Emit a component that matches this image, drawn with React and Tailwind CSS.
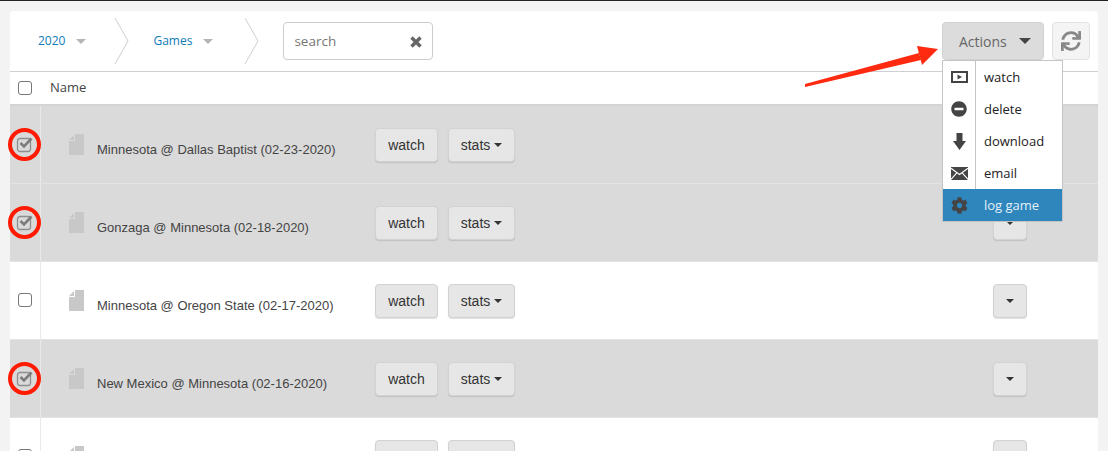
import { FaCog, FaMinusCircle, FaSync } from 'react-icons/fa'

const rows = [
  { name: 'Minnesota @ Dallas Baptist (02-23-2020)', checked: true },
  { name: 'Gonzaga @ Minnesota (02-18-2020)', checked: true },
  { name: 'Minnesota @ Oregon State (02-17-2020)', checked: false },
  { name: 'New Mexico @ Minnesota (02-16-2020)', checked: true },
  { name: '', checked: false },
]

function Caret({ className }) {
  return <span className={`inline-block h-0 w-0 border-x-transparent ${className}`} />
}

function Crumb({ label, className, chevron }) {
  return (
    <div className={`flex items-center ${className}`}>
      <a className="text-[12px] text-[#0f7ab8]">{label}</a>
      <Caret className="ml-[11px] border-x-[5px] border-t-[5px] border-t-[#b5b5b5]" />
      <svg className={`h-[48px] w-[15px] ${chevron}`} viewBox="0 0 15 48" fill="none" stroke="#cfcfcf">
        <path d="M1 1 L14 24 L1 47" />
      </svg>
    </div>
  )
}

function Checkbox({ checked }) {
  if (!checked) return <span className="-ml-px mt-px block h-[14px] w-[14px] rounded-[3px] border border-[#777] bg-white" />
  return (
    <svg className="h-[18px] w-[18px]" viewBox="0 0 18 18" fill="none">
      <rect x="1.5" y="2.5" width="13" height="13" rx="2.5" stroke="#8f8f8f" strokeWidth="1.3" />
      <path d="M4.5 7 L8 10.5 L15.5 2.5" stroke="#7c7c7c" strokeWidth="2.6" />
    </svg>
  )
}

function Row({ row }) {
  return (
    <div className={`flex h-[78px] border-b border-[#e3e3e3] ${row.checked ? 'bg-[#dadada]' : 'bg-white'}`}>
      <div className="relative flex w-[31px] justify-center border-r border-[#eaeaea] pt-[30px]">
        <Checkbox checked={row.checked} />
        {row.checked && (
          <span className="absolute left-[-2px] top-[22px] h-[33px] w-[33px] rounded-full border-[4px] border-[#ff1a00]" />
        )}
      </div>
      <div className="flex flex-1 pt-[28px]">
        <svg className="ml-[28px] h-[21px] w-[15px]" viewBox="0 0 15 21" fill="#c8c8c8">
          <path d="M6 0h9v21H0V7h6z" />
          <path d="M0 6l5-5v5z" />
        </svg>
        <span className="ml-[13px] mt-[6px] w-[278px] font-['Liberation_Sans',sans-serif] text-[13px] text-[#444]">
          {row.name}
        </span>
        <div className="mt-[-6px] flex h-[34px] gap-[10px] font-['Liberation_Sans',sans-serif] text-[14px] text-[#333]">
          <button className="h-[34px] w-[63px] rounded-[4px] border border-[#d2d2d2] bg-[#e6e6e6] shadow-[0_1px_1px_rgba(0,0,0,0.12)]">
            watch
          </button>
          <button className="flex h-[34px] w-[67px] items-center justify-center gap-[4px] rounded-[4px] border border-[#d2d2d2] bg-[#e6e6e6] shadow-[0_1px_1px_rgba(0,0,0,0.12)]">
            stats
            <Caret className="border-x-[4px] border-t-[4px] border-t-[#333]" />
          </button>
        </div>
        <button className="ml-[478px] mt-[-6px] flex h-[34px] w-[34px] items-center justify-center rounded-[4px] border border-[#d2d2d2] bg-[#e6e6e6] shadow-[0_1px_1px_rgba(0,0,0,0.12)]">
          <Caret className="border-x-[4px] border-t-[4px] border-t-[#333]" />
        </button>
      </div>
    </div>
  )
}

const menu = [
  {
    label: 'watch',
    icon: (
      <svg className="h-[12px] w-[17px]" viewBox="0 0 17 12" fill="#444">
        <path fillRule="evenodd" d="M0 0h17v12H0z M2 2v8h13V2z" />
        <path d="M6.5 3.5l4.5 2.5-4.5 2.5z" />
      </svg>
    ),
  },
  { label: 'delete', icon: <FaMinusCircle className="h-[16px] w-[16px] text-[#444]" /> },
  {
    label: 'download',
    icon: (
      <svg className="h-[17px] w-[13px]" viewBox="0 0 13 17" fill="#444">
        <path d="M3.5 0h6v8h3.5l-6.5 9-6.5-9h3.5z" />
      </svg>
    ),
  },
  {
    label: 'email',
    icon: (
      <svg className="h-[13px] w-[17px]" viewBox="0 0 17 13">
        <path d="M0 0h17v13H0z" fill="#444" />
        <path d="M0 1.2l8.5 6.3 8.5-6.3M0 12.4l5.8-6.6M17 12.4l-5.8-6.6" fill="none" stroke="#fff" strokeWidth="1.1" />
      </svg>
    ),
  },
]

export default function App() {
  return (
    <div className="h-[451px] w-[1108px] overflow-hidden border-t border-t-[#222] bg-[#f3f3f3] pl-[10px] pr-[10px] pt-[10px] font-['Open_Sans',sans-serif]">
      <div className="relative rounded-t-[4px] bg-white">
        <div className="flex h-[61px] items-center border-b border-[#cfcfcf]">
          <Crumb label="2020" className="ml-[28px]" chevron="ml-[28px]" />
          <Crumb label="Games" className="ml-[24px]" chevron="ml-[31px]" />
          <div className="ml-[24px] flex h-[38px] w-[150px] items-center justify-between rounded-[4px] border border-[#ccc] pl-[10px] pr-[10px] pt-px text-[13.5px] text-[#777]">
            search
            <svg className="h-[12px] w-[12px]" viewBox="0 0 12 12" fill="none" stroke="#666" strokeWidth="3.4">
              <path d="M1.5 1.5l9 9M10.5 1.5l-9 9" />
            </svg>
          </div>
          <button className="ml-auto flex h-[38px] w-[102px] items-center rounded-[4px] border border-[#d2d2d2] bg-[#dcdcdc] pl-[16px] text-[14px] text-[#666]">
            Actions
            <Caret className="ml-[12px] border-x-[6px] border-t-[6px] border-t-[#444]" />
          </button>
          <button className="ml-[8px] mr-[8px] flex h-[38px] w-[38px] items-center justify-center rounded-[4px] border border-[#e2e2e2] bg-[#f4f4f4]">
            <FaSync className="h-[20px] w-[20px] text-[#888]" />
          </button>
        </div>

        <div className="flex h-[34px] items-center border-b-2 border-[#d4d4d4] pl-[8px] text-[13px] text-[#444]">
          <span className="block h-[14px] w-[14px] rounded-[3px] border border-[#777]" />
          <span className="ml-[18px]">Name</span>
        </div>

        {rows.map((row, i) => (
          <Row key={i} row={row} />
        ))}

        <div className="absolute left-[932px] top-[49px] w-[121px] border border-[#c4c4c4] bg-white text-[13px] text-[#222]">
          {menu.map((item) => (
            <div key={item.label} className="flex h-[32px]">
              <span className="flex w-[33px] items-center justify-center border-r border-[#c4c4c4]">{item.icon}</span>
              <span className="ml-[8px] flex items-center pt-[2px]">{item.label}</span>
            </div>
          ))}
          <div className="flex h-[32px] bg-[#2e86bc] text-[#e3f0f8]">
            <span className="flex w-[33px] items-center justify-center">
              <FaCog className="h-[17px] w-[17px] text-[#444]" />
            </span>
            <span className="ml-[8px] flex items-center pt-[2px]">log game</span>
          </div>
        </div>

        <svg className="absolute left-[793px] top-[31px] h-[60px] w-[150px]" viewBox="0 0 150 60">
          <path d="M2 42 L2 45 L118 18 L116 11 z" fill="#ff2a10" />
          <path d="M135 7 L114 4 L119 23 z" fill="#ff2a10" />
        </svg>
      </div>
    </div>
  )
}
